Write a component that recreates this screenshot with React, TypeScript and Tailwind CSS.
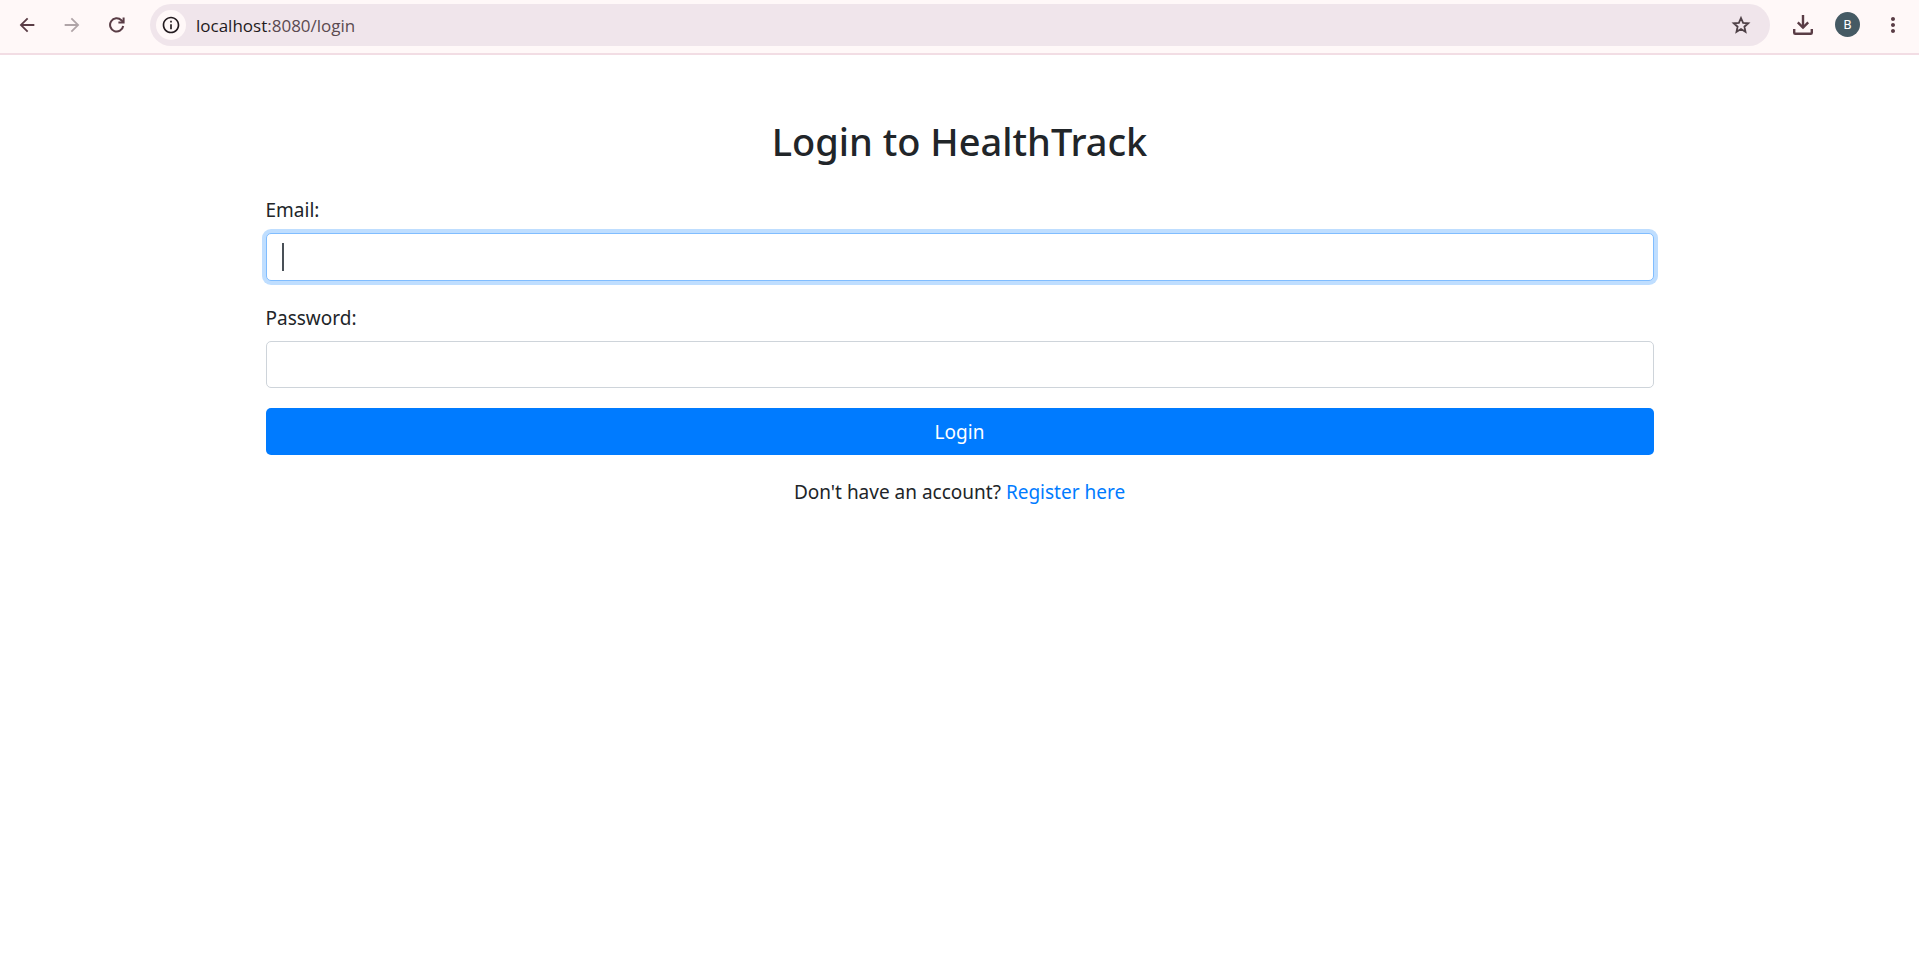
import { useState } from "react";
import { MdArrowBack, MdArrowForward, MdInfoOutline, MdMoreVert } from "react-icons/md";

function ReloadIcon() {
  return (
    <svg viewBox="0 0 16 16" className="size-4" fill="none" stroke="currentColor" strokeWidth="2" aria-hidden="true">
      <path d="M14.2 9A6.6 6.6 0 1 1 12.4 3.3L14.4 5.3" />
      <path d="M14.6 0.5V5.6H9.4" />
    </svg>
  );
}

function StarIcon() {
  return (
    <svg viewBox="0 0 22 22" className="size-[22px]" fill="none" stroke="currentColor" strokeWidth="1.8" aria-hidden="true">
      <path d="M11 4L13.1 8.8L18.3 9.3L14.4 12.7L15.5 17.8L11 15.1L6.5 17.8L7.6 12.7L3.7 9.3L8.9 8.8Z" />
    </svg>
  );
}

function DownloadIcon() {
  return (
    <svg viewBox="0 0 20 20" className="size-5" fill="none" stroke="currentColor" strokeWidth="2.4" aria-hidden="true">
      <path d="M10 0V13" />
      <path d="M4.8 7.4L10 12.6L15.2 7.4" />
      <path d="M1.2 14V17.8Q1.2 18.8 2.2 18.8H17.8Q18.8 18.8 18.8 17.8V14" />
    </svg>
  );
}

function BrowserBar() {
  return (
    <header className="flex h-[55px] items-center border-b-2 border-[#f2dde4] bg-[#fff8f8] pt-1 pb-2 pl-[15px] pr-[14px] font-['Open_Sans','Noto_Sans',sans-serif] text-[#5a3d46]">
      <nav aria-label="Browser navigation" className="flex w-[135px] shrink-0 gap-[21px]">
        <button type="button" aria-label="Back" className="flex size-6 items-center justify-center">
          <MdArrowBack className="size-[22px]" />
        </button>
        <button type="button" aria-label="Forward" className="flex size-6 items-center justify-center text-[#b0a5a8]">
          <MdArrowForward className="size-[22px]" />
        </button>
        <button type="button" aria-label="Reload" className="flex size-6 items-center justify-center">
          <ReloadIcon />
        </button>
      </nav>
      <div className="flex h-[42px] min-w-0 flex-1 items-center rounded-full bg-[#f0e5eb] pl-[6px] pr-[18px]">
        <button type="button" aria-label="Site information" className="flex size-[30px] items-center justify-center rounded-full bg-[#fff8f8] text-[#231b1f]">
          <MdInfoOutline className="size-5" />
        </button>
        <span className="ml-[10px] flex-1 pt-[2px] text-[17px] leading-6 text-[#5b4a50]">
          <span className="text-[#1f1a1c]">localhost</span>:8080/login
        </span>
        <button type="button" aria-label="Bookmark" className="text-[#4f4147]">
          <StarIcon />
        </button>
      </div>
      <div className="flex shrink-0 items-center pl-[23px]">
        <button type="button" aria-label="Downloads">
          <DownloadIcon />
        </button>
        <button type="button" aria-label="Profile" className="ml-[22px] flex size-[25px] items-center justify-center rounded-full bg-[#455a64] font-[Roboto,sans-serif] text-[13px] leading-4 text-white">
          B
        </button>
        <button type="button" aria-label="Menu" className="ml-[21px]">
          <MdMoreVert className="size-6" />
        </button>
      </div>
    </header>
  );
}

const inputClass = "w-full rounded-[5px] border bg-white px-[15px] text-[#495057] outline-none";

export default function App() {
  const [email, setEmail] = useState("");
  const [password, setPassword] = useState("");

  return (
    <div className="min-h-screen bg-white">
      <BrowserBar />
      <main className="mx-auto max-w-[1424px] px-[18px] pt-[62px] font-['Noto_Sans','Open_Sans',sans-serif] text-[19px] leading-[30px] text-[#212529]">
        <h2 className="mb-[30px] text-center text-[38px] leading-[48px] font-medium">Login to HealthTrack</h2>
        <form onSubmit={(event) => event.preventDefault()}>
          <label htmlFor="email" className="mb-2 block">
            Email:
          </label>
          <div className="relative mb-[22px]">
            <input
              id="email"
              type="email"
              value={email}
              onChange={(event) => setEmail(event.target.value)}
              className={`${inputClass} h-12 border-[#80bdff] caret-transparent ring-4 ring-[#bfdeff]`}
            />
            {email === "" && <span aria-hidden="true" className="pointer-events-none absolute left-4 top-[10px] h-7 w-[2px] bg-[#495057]" />}
          </div>
          <label htmlFor="password" className="mb-2 block">
            Password:
          </label>
          <input
            id="password"
            type="password"
            value={password}
            onChange={(event) => setPassword(event.target.value)}
            className={`${inputClass} mb-5 h-[47px] border-[#ced4da]`}
          />
          <button type="submit" className="h-[47px] w-full rounded-[5px] bg-[#007bff] text-white">
            Login
          </button>
        </form>
        <p className="mt-[22px] text-center">
          Don't have an account?{" "}
          <a href="/register" className="text-[#007bff]">
            Register here
          </a>
        </p>
      </main>
    </div>
  );
}
